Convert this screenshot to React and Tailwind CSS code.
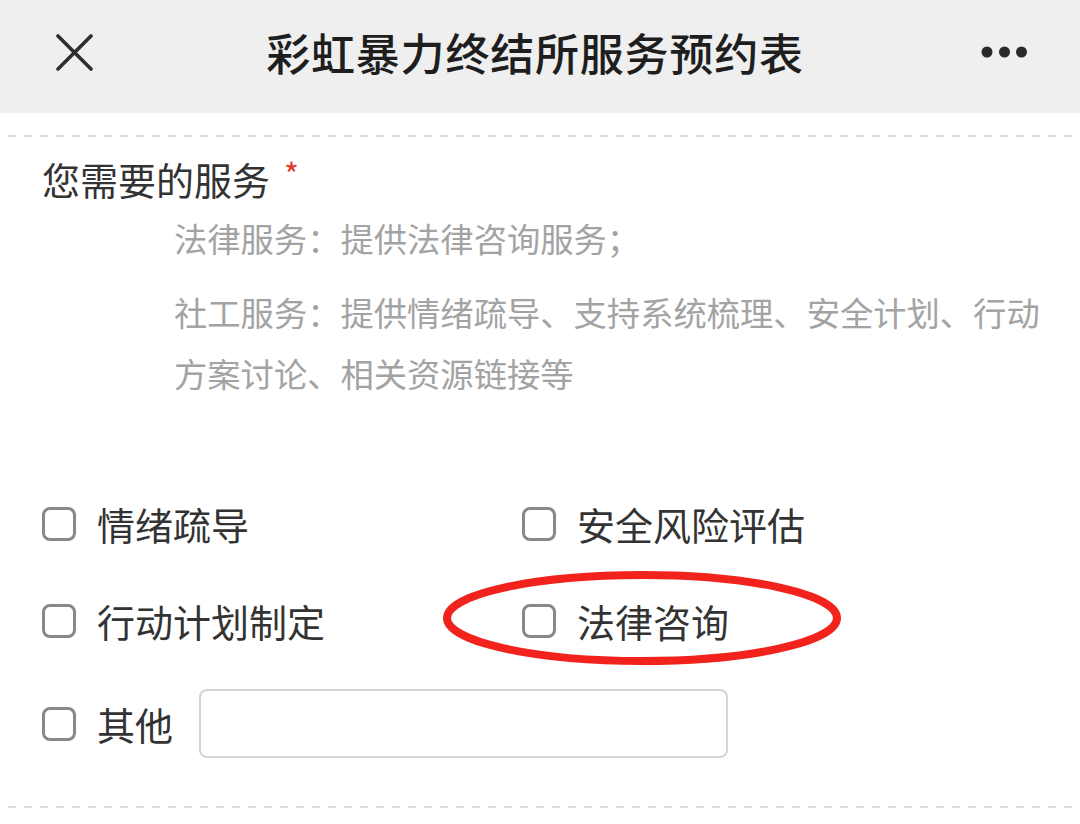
import React from "react";

function Box() {
  return <div className="w-[34px] h-[34px] shrink-0 border-[3px] border-[#888888] rounded-[8px] bg-white" />;
}

function Item({ label }) {
  return (
    <div className="flex items-center">
      <Box />
      <span className="ml-[21px] text-[38px] leading-none text-[#333]">{label}</span>
    </div>
  );
}

function Dashed({ className = "" }) {
  return (
    <div
      className={
        "h-[2px] w-full bg-[linear-gradient(to_right,transparent_0px,transparent_8px,#dcdcdc_8px,#dcdcdc_16px)] bg-[length:16px_2px] bg-repeat-x " +
        className
      }
    />
  );
}

export default function App() {
  return (
    <div className="relative w-[1080px] h-[824px] overflow-hidden bg-white font-['Noto_Sans_CJK_SC','Noto_Sans',sans-serif]">
      {/* header */}
      <div className="h-[113px] bg-[#efefef] flex items-center pb-[9px] pl-[56px] pr-[53px]">
        <svg width="37" height="37" viewBox="0 0 37 37" className="shrink-0">
          <path d="M2 2 L35 35 M35 2 L2 35" stroke="#2e2e2e" strokeWidth="3.6" strokeLinecap="round" />
        </svg>
        <div className="flex-1 text-center text-[44px] leading-none font-medium text-[#1e1e1e] tracking-[0.8px] pr-[4px]">
          彩虹暴力终结所服务预约表
        </div>
        <svg width="46" height="12" viewBox="0 0 46 12" className="shrink-0">
          <circle cx="6" cy="6" r="5.5" fill="#2a2a2a" />
          <circle cx="23.5" cy="6" r="5.5" fill="#2a2a2a" />
          <circle cx="40.5" cy="6" r="5.5" fill="#2a2a2a" />
        </svg>
      </div>

      <Dashed className="mt-[22px]" />

      <div className="pl-[42px] pt-[17px]">
        <div className="flex items-start text-[38px] leading-[49px] text-[#333]">
          <span>您需要的服务</span>
          <span className="ml-[14px] text-[32px] leading-[38px] text-[#e53b30]">*</span>
        </div>
        <div className="ml-[132px] mt-[4px] pr-[28px] text-[33.3px] leading-[61px] text-[#a3a3a3]">
          <p>法律服务：提供法律咨询服务；</p>
          <p className="mt-[13px]">社工服务：提供情绪疏导、支持系统梳理、安全计划、行动方案讨论、相关资源链接等</p>
        </div>

        <div className="mt-[72px] grid grid-cols-[480px_1fr]">
          <div className="h-[97px] flex items-center"><Item label="情绪疏导" /></div>
          <div className="h-[97px] flex items-center"><Item label="安全风险评估" /></div>
          <div className="h-[97px] flex items-center"><Item label="行动计划制定" /></div>
          <div className="h-[97px] flex items-center"><Item label="法律咨询" /></div>
        </div>
        <div className="h-[109px] flex items-center">
          <Box />
          <span className="ml-[21px] text-[38px] leading-none text-[#333]">其他</span>
          <div className="ml-[26px] w-[529px] h-[69px] border-2 border-[#d4d4d4] rounded-[8px] bg-white" />
        </div>
      </div>

      <Dashed className="mt-[28px]" />

      {/* annotation */}
      <svg className="absolute left-[443px] top-[571px]" width="398" height="94" viewBox="0 0 398 94">
        <ellipse cx="199" cy="47" rx="195" ry="43" fill="none" stroke="#f2231c" strokeWidth="8" />
      </svg>
    </div>
  );
}
